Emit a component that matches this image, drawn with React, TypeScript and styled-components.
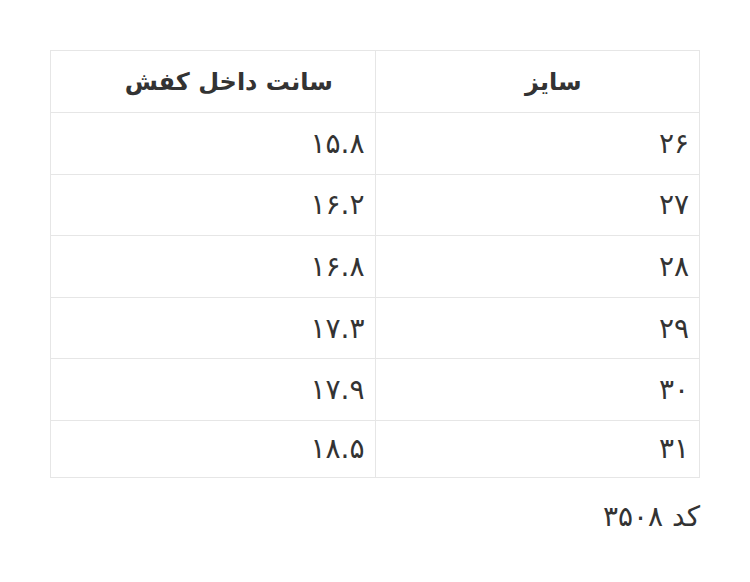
import React from 'react';
import styled, { createGlobalStyle } from 'styled-components';

const GlobalStyle = createGlobalStyle`
  html, body {
    margin: 0;
    padding: 0;
    background: #fff;
  }
  body {
    font-family: "DejaVu Sans", "Noto Sans", sans-serif;
    color: #333;
  }
`;

const Page = styled.div`
  direction: rtl;
  padding: 50px 50px 0;
`;

const SizeTable = styled.table`
  width: 100%;
  border-collapse: collapse;
  table-layout: fixed;
  border: 1px solid #e6e6e6;
`;

const HeadCell = styled.th`
  height: 61px;
  padding: 0 8px 0 40px;
  font-size: 24px;
  font-weight: 600;
  text-align: center;
  border: 1px solid #e6e6e6;
`;

const Cell = styled.td<{ $short?: boolean }>`
  height: ${(p) => (p.$short ? '56px' : '60.6px')};
  padding: 0 10px;
  font-size: 28px;
  text-align: right;
  border: 1px solid #e6e6e6;
`;

const Code = styled.p`
  margin: 22px 0 0;
  font-size: 28px;
  text-align: right;
`;

const rows = [
  ['۲۶', '۱۵.۸'],
  ['۲۷', '۱۶.۲'],
  ['۲۸', '۱۶.۸'],
  ['۲۹', '۱۷.۳'],
  ['۳۰', '۱۷.۹'],
  ['۳۱', '۱۸.۵'],
];

const App: React.FC = () => (
  <>
    <GlobalStyle />
    <Page>
      <SizeTable>
        <thead>
          <tr>
            <HeadCell>سایز</HeadCell>
            <HeadCell>سانت داخل کفش</HeadCell>
          </tr>
        </thead>
        <tbody>
          {rows.map(([size, cm], i) => (
            <tr key={size}>
              <Cell $short={i === rows.length - 1}>{size}</Cell>
              <Cell $short={i === rows.length - 1}>{cm}</Cell>
            </tr>
          ))}
        </tbody>
      </SizeTable>
      <Code>کد ۳۵۰۸</Code>
    </Page>
  </>
);

export default App;
